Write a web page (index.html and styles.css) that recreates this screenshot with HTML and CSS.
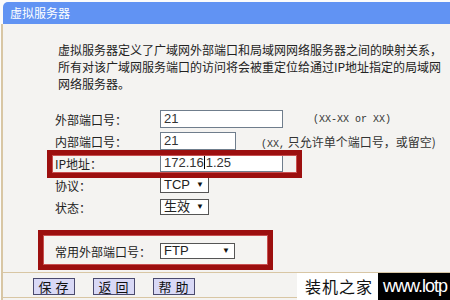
FILE: index.html
```html
<!DOCTYPE html>
<html lang="zh-CN">
<head>
    <meta charset="UTF-8">
    <title>虚拟服务器</title>
    <link rel="stylesheet" href="styles.css">
</head>
<body>

    <div class="titlebar">虚拟服务器</div>

    <div class="content">
        <p class="intro">虚拟服务器定义了广域网外部端口和局域网网络服务器之间的映射关系，<br>所有对该广域网服务端口的访问将会被重定位给通过IP地址指定的局域网<br>网络服务器。</p>

        <div class="form">
            <div class="row">
                <span class="label">外部端口号：</span>
                <span class="field wide">21</span>
                <span class="hint mono">(XX-XX or XX)</span>
            </div>
            <div class="row">
                <span class="label">内部端口号：</span>
                <span class="field short">21</span>
                <span class="hint hint-near"><span class="mono">(XX,</span> 只允许单个端口号，或留空)</span>
            </div>
            <div class="row mark mark-ip">
                <span class="label">IP地址：</span>
                <span class="field wide">172.16<span class="caret"></span>1.25</span>
            </div>
            <div class="row">
                <span class="label">协议：</span>
                <span class="select">TCP <span class="arrow">▼</span></span>
            </div>
            <div class="row">
                <span class="label">状态：</span>
                <span class="select">生效 <span class="arrow">▼</span></span>
            </div>
            <div class="row row-common mark mark-common">
                <span class="label">常用外部端口号：</span>
                <span class="select select-wide">FTP <span class="arrow">▼</span></span>
            </div>
        </div>

        <div class="buttons">
            <button type="button">保存</button>
            <button type="button">返回</button>
            <button type="button">帮助</button>
        </div>
    </div>

    <div class="watermark">
        <span class="wm-name">装机之家</span>
        <span class="wm-url">www.lotp</span>
    </div>

</body>
</html>
```

FILE: styles.css
```css
html {
    background-color: #fbfbfb;
}
body {
    margin: 0;
    font-family: "Noto Sans CJK SC", sans-serif;
    font-size: 12px;
    color: #222;
    height: 300px;
    overflow: hidden;
    position: relative;
}
.titlebar {
    margin: 2px 0 0 3px;
    height: 22px;
    line-height: 22px;
    padding-left: 7px;
    background-color: #6193f3;
    border-top-left-radius: 5px;
    color: #fff;
    font-size: 12px;
}
.content {
    margin-left: 1px;
    border-left: 2px solid #d8c6a4;
    background-color: #f4f3f1;
    height: 276px;
}
.intro {
    margin: 0;
    padding: 17px 0 0 55px;
    line-height: 17px;
    white-space: nowrap;
}
.form {
    margin-top: 16px;
    padding-left: 52px;
}
.row {
    display: flex;
    align-items: center;
    height: 22px;
}
.label {
    width: 105px;
}
.field {
    box-sizing: border-box;
    height: 18px;
    line-height: 16px;
    padding-left: 3px;
    border: 1px solid #6f7d8c;
    background-color: #fff;
    font-family: "Liberation Sans", Arial, sans-serif;
    font-size: 13px;
    color: #333;
}
.wide {
    width: 123px;
}
.short {
    width: 76px;
}
.caret {
    display: inline-block;
    width: 1px;
    height: 14px;
    margin: 0 1px -2px 0;
    background-color: #000;
}
.hint {
    margin-left: 30px;
    color: #333;
}
.hint-near {
    margin-left: 25px;
}
.mono {
    font-family: "Liberation Mono", "Courier New", monospace;
    font-size: 10px;
}
.select {
    box-sizing: border-box;
    width: 49px;
    height: 16px;
    padding: 0 4px 0 3px;
    display: flex;
    align-items: center;
    justify-content: space-between;
    border: 1px solid #555;
    background-color: #fff;
    font-family: "Liberation Sans", "Noto Sans CJK SC", sans-serif;
    font-size: 13px;
    line-height: 14px;
    color: #222;
}
.select-wide {
    width: 75px;
}
.arrow {
    font-size: 8px;
    color: #111;
}
.row-common {
    margin-top: 22px;
}
.mark {
    position: relative;
}
.mark::after {
    content: "";
    position: absolute;
    border: 5px solid #9c0f0f;
    box-shadow: inset 0 0 0 1px #c85050;
}
.mark-ip::after {
    left: -8px;
    top: -2px;
    width: 245px;
    height: 18px;
}
.mark-common::after {
    left: -17px;
    top: -10px;
    width: 225px;
    height: 30px;
}
.buttons {
    margin-top: 10px;
    border-top: 1px solid #d8c6a4;
    border-bottom: 1px solid #d8c6a4;
    padding: 5px 0 2px 30px;
    display: flex;
    gap: 18px;
}
button {
    box-sizing: border-box;
    width: 42px;
    height: 17px;
    padding: 0 0 0 3px;
    border: 1px solid #4a4a6e;
    border-radius: 0;
    background-color: #d9d9f6;
    font-family: "Noto Sans CJK SC", sans-serif;
    font-size: 13px;
    line-height: 15px;
    letter-spacing: 4px;
    color: #111;
}
.watermark {
    position: absolute;
    left: 297px;
    bottom: 0;
    right: 0;
    height: 27px;
    display: flex;
    overflow: hidden;
}
.wm-name {
    width: 81px;
    background-color: #fff;
    color: #111;
    font-size: 16px;
    line-height: 27px;
    letter-spacing: 1px;
    padding-left: 8px;
    box-sizing: border-box;
    white-space: nowrap;
}
.wm-url {
    flex: 1;
    background-color: #000;
    color: #fff;
    font-family: "Liberation Sans", Arial, sans-serif;
    font-size: 18px;
    letter-spacing: -1px;
    line-height: 27px;
    padding-left: 5px;
    white-space: nowrap;
    overflow: hidden;
}
```
